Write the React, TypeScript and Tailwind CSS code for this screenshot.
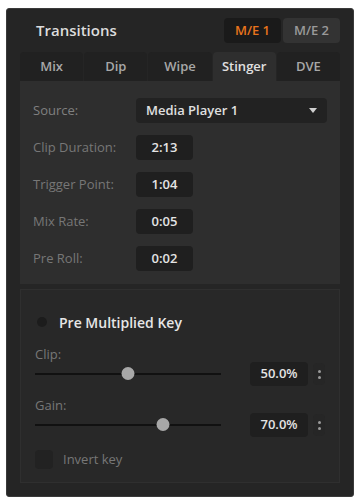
import { useState } from 'react';

const TABS = ['Mix', 'Dip', 'Wipe', 'Stinger', 'DVE'];

const TIMING_ROWS = [
  { label: 'Clip Duration:', value: '2:13' },
  { label: 'Trigger Point:', value: '1:04' },
  { label: 'Mix Rate:', value: '0:05' },
  { label: 'Pre Roll:', value: '0:02' },
];

function Stepper() {
  return (
    <div className="flex h-[22px] w-[12px] flex-col items-center justify-center gap-[3px] rounded-sm bg-[#262626]">
      <span className="h-[3px] w-[3px] rounded-full bg-[#9a9a9a]" />
      <span className="h-[3px] w-[3px] rounded-full bg-[#9a9a9a]" />
    </div>
  );
}

function SliderRow({ label, value, pos }: { label: string; value: string; pos: number }) {
  return (
    <div className="flex flex-col">
      <div className="h-[16px] text-[13px] font-medium leading-[16px] text-[#777777]">{label}</div>
      <div className="flex h-[24px] items-center">
        <div className="relative h-[24px] w-[186px]">
          <div className="absolute left-0 right-0 top-[11px] h-[2px] bg-[#111]" />
          <div
            className="absolute top-[5px] h-[13px] w-[13px] -translate-x-1/2 rounded-full bg-[#a8a8a8]"
            style={{ left: `${pos}%` }}
          />
        </div>
        <div className="ml-auto flex items-center gap-[5px]">
          <div className="flex h-[24px] w-[58px] items-center justify-center rounded-sm bg-[#1f1f1f] text-[13px] font-semibold text-[#e4e4e4]">
            {value}
          </div>
          <Stepper />
        </div>
      </div>
    </div>
  );
}

export default function App() {
  const [active, setActive] = useState('Stinger');

  return (
    <div className="min-h-[501px] bg-white pl-[6px] pt-[8px]" style={{ fontFamily: '"Open Sans", "Liberation Sans", sans-serif' }}>
      <div className="flex h-[489px] w-[348px] flex-col rounded-[3px] border border-[#3a3a3a] bg-[#252525] px-[13px] pb-[13px]">
        <div className="flex h-[43px] items-center">
          <span className="pl-[16px] text-[15px] font-semibold text-[#dcdcdc]">Transitions</span>
          <div className="ml-auto flex gap-[2px]">
            <div className="flex h-[25px] w-[57px] items-center justify-center rounded-sm bg-[#1a1a1a] text-[13px] font-semibold text-[#e8741c]">
              M/E 1
            </div>
            <div className="flex h-[25px] w-[57px] items-center justify-center rounded-sm bg-[#333333] text-[13px] font-semibold text-[#9a9a9a]">
              M/E 2
            </div>
          </div>
        </div>

        <div className="grid h-[29px] grid-cols-5 gap-[1px]">
          {TABS.map((tab) => (
            <button
              key={tab}
              onClick={() => setActive(tab)}
              className={
                tab === active
                  ? 'rounded-t-sm bg-[#2e2e2e] text-[13px] font-semibold text-[#e0e0e0]'
                  : 'rounded-t-sm bg-[#212121] text-[13px] font-semibold text-[#a8a8a8]'
              }
            >
              {tab}
            </button>
          ))}
        </div>

        <div className="flex h-[203px] flex-col gap-[12px] bg-[#2e2e2e] px-[13px] pt-[17px]">
          <div className="flex h-[25px] items-center">
            <span className="w-[103px] text-[13px] font-medium text-[#808080]">Source:</span>
            <div className="flex h-[25px] flex-1 items-center rounded-sm bg-[#222222] pl-[10px] pr-[10px] text-[13px] font-semibold text-[#e0e0e0]">
              Media Player 1
              <svg className="ml-auto" width="8" height="5" viewBox="0 0 8 5">
                <path d="M0 0h8L4 5z" fill="#d0d0d0" />
              </svg>
            </div>
          </div>
          {TIMING_ROWS.map((row) => (
            <div key={row.label} className="flex h-[25px] items-center">
              <span className="w-[103px] text-[13px] font-medium text-[#777777]">{row.label}</span>
              <div className="flex h-[25px] w-[57px] items-center justify-center rounded-sm bg-[#1f1f1f] text-[13px] font-semibold text-[#e4e4e4]">
                {row.value}
              </div>
            </div>
          ))}
        </div>

        <div className="mt-[5px] flex flex-1 flex-col border border-[#2f2f2f] bg-[#282828] px-[14px] pt-[24px]">
          <div className="flex h-[16px] items-center gap-[12px] pl-[2px]">
            <span className="h-[10px] w-[10px] rounded-full bg-[#1c1c1c]" />
            <span className="text-[14px] font-semibold text-[#e6e6e6]">Pre Multiplied Key</span>
          </div>
          <div className="mt-[16px] flex flex-col gap-[11px]">
            <SliderRow label="Clip:" value="50.0%" pos={50} />
            <SliderRow label="Gain:" value="70.0%" pos={69} />
          </div>
          <div className="mt-[13px] flex items-center gap-[10px]">
            <span className="h-[19px] w-[18px] rounded-sm bg-[#222222]" />
            <span className="text-[13px] font-medium text-[#777777]">Invert key</span>
          </div>
        </div>
      </div>
    </div>
  );
}
